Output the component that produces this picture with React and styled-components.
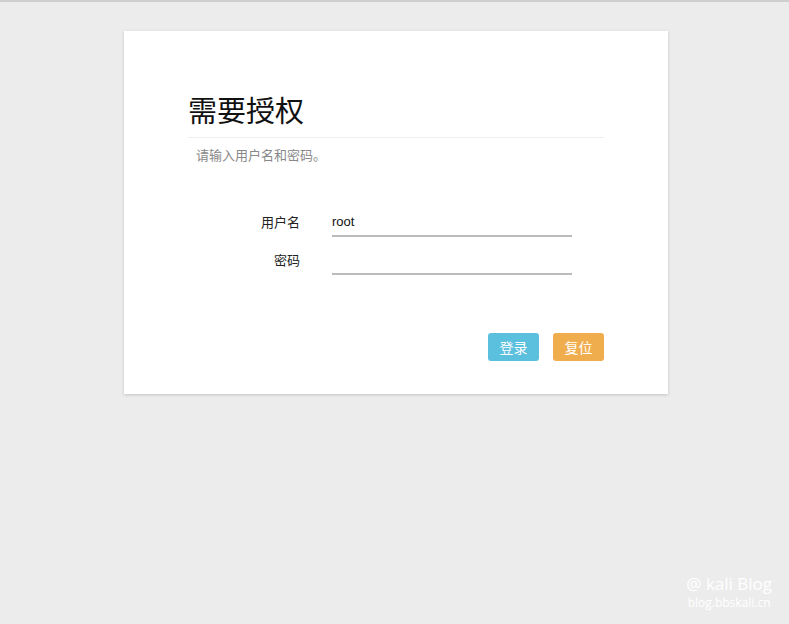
import React from 'react';
import styled, { createGlobalStyle } from 'styled-components';

const GlobalStyle = createGlobalStyle`
html, body {
    margin: 0;
    padding: 0;
    background: #ececec;
    font-family: "Liberation Sans", "Noto Sans CJK SC", sans-serif;
}
`;

const Page = styled.div`
    min-height: 624px;
    box-sizing: border-box;
    border-top: 2px solid #cfcfcf;
    position: relative;
    padding-top: 29px;
`;

const Card = styled.div`
    width: 544px;
    margin-left: 124px;
    box-sizing: border-box;
    background: #fff;
    box-shadow: 0 1px 3px rgba(0, 0, 0, 0.18);
    padding: 61px 64px 33px 64px;
`;

const Title = styled.h2`
    font-size: 29px;
    font-weight: normal;
    color: #111;
    margin: 0;
    padding: 0 0 5px 0;
    line-height: 40px;
    border-bottom: 1px solid #eee;
`;

const Hint = styled.p`
    margin: 9px 0 0 8px;
    font-size: 13px;
    color: #888;
    line-height: 18px;
`;

const Form = styled.div`
    margin-top: 47px;
    display: flex;
    flex-direction: column;
    gap: 13px;
`;

const Row = styled.div`
    display: flex;
    align-items: center;
    gap: 32px;
`;

const Label = styled.label`
    width: 112px;
    text-align: right;
    font-size: 13px;
    color: #222;
    padding-bottom: 6px;
`;

const Input = styled.input`
    width: 240px;
    height: 24px;
    box-sizing: border-box;
    border: none;
    border-bottom: 2px solid #bbb;
    outline: none;
    padding: 0 0 5px 0;
    font-family: "Liberation Sans", "Noto Sans CJK SC", sans-serif;
    font-size: 13px;
    color: #111;
    background: transparent;
`;

const Actions = styled.div`
    margin-top: 58px;
    display: flex;
    justify-content: flex-end;
    gap: 14px;
`;

const Button = styled.button`
    width: 51px;
    height: 28px;
    border: none;
    border-radius: 3px;
    color: #fff;
    font-size: 14px;
    font-family: "Liberation Sans", "Noto Sans CJK SC", sans-serif;
    background: ${p => p.$color};
    padding: 0;
`;

const Watermark = styled.div`
    position: absolute;
    right: 17px;
    bottom: 14px;
    color: #fff;
    text-align: center;
    font-family: "Open Sans", "Liberation Sans", sans-serif;
    display: flex;
    flex-direction: column;
    gap: 1px;
`;

const MarkTitle = styled.div`
    font-size: 17px;
    line-height: 20px;
`;

const MarkSub = styled.div`
    font-size: 12px;
    line-height: 15px;
`;

const App = () => {
    return (
        <>
            <GlobalStyle />
            <Page>
                <Card>
                    <Title>需要授权</Title>
                    <Hint>请输入用户名和密码。</Hint>
                    <Form>
                        <Row>
                            <Label>用户名</Label>
                            <Input defaultValue='root' />
                        </Row>
                        <Row>
                            <Label>密码</Label>
                            <Input type='password' />
                        </Row>
                    </Form>
                    <Actions>
                        <Button $color='#5bc0de'>登录</Button>
                        <Button $color='#f0ad4e'>复位</Button>
                    </Actions>
                </Card>
                <Watermark>
                    <MarkTitle>@ kali Blog</MarkTitle>
                    <MarkSub>blog.bbskali.cn</MarkSub>
                </Watermark>
            </Page>
        </>
    );
};

export default App;
